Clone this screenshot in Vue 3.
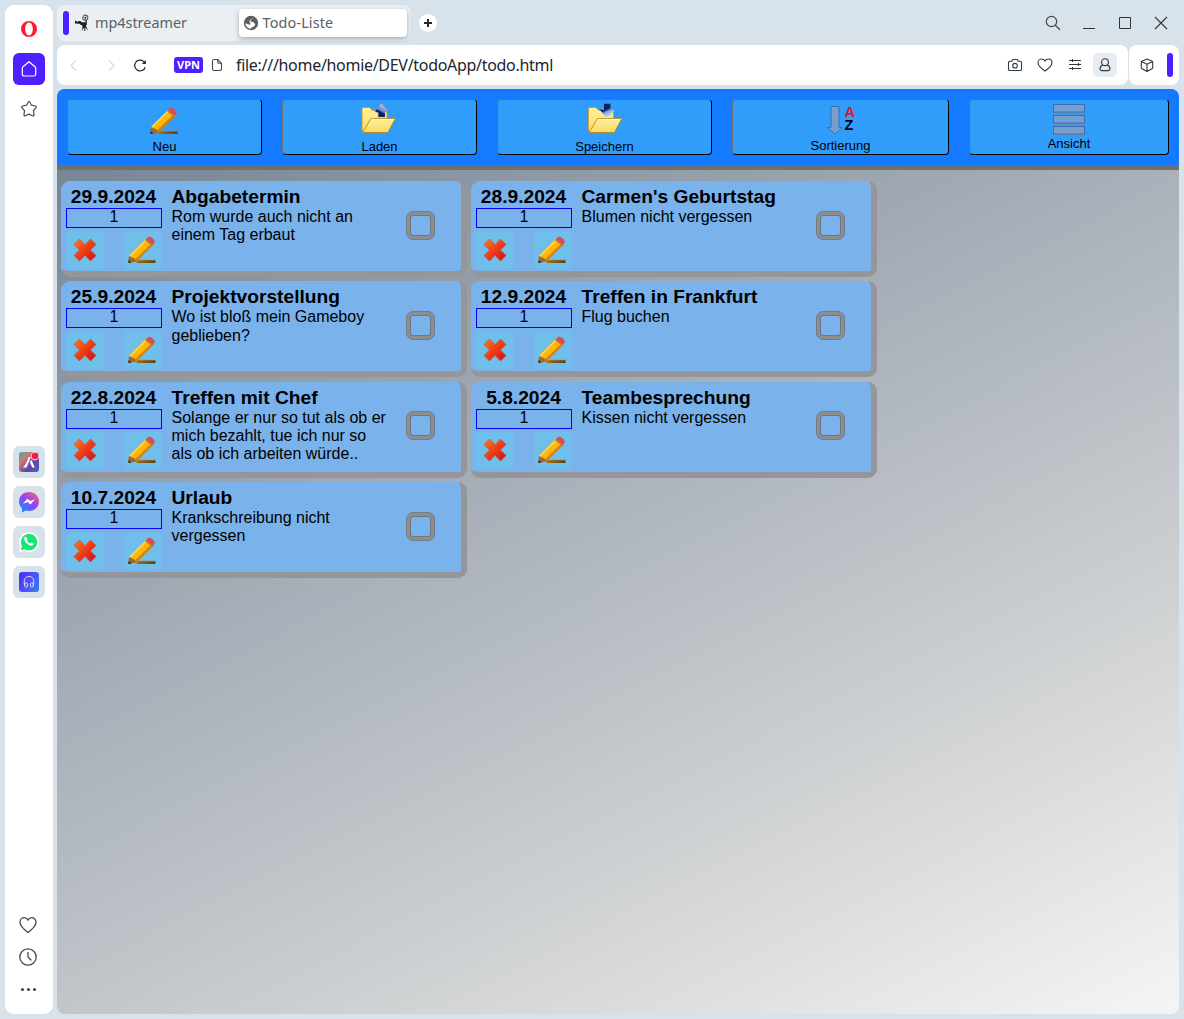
<script setup>
const actions = [
  { id: 'new', label: 'Neu', width: 195 },
  { id: 'load', label: 'Laden', width: 195 },
  { id: 'save', label: 'Speichern', width: 215 },
  { id: 'sort', label: 'Sortierung', width: 217 },
  { id: 'view', label: 'Ansicht', width: 200 },
]

const todos = [
  { date: '29.9.2024', title: 'Abgabetermin', text: 'Rom wurde auch nicht an einem Tag erbaut' },
  { date: '28.9.2024', title: "Carmen's Geburtstag", text: 'Blumen nicht vergessen' },
  { date: '25.9.2024', title: 'Projektvorstellung', text: 'Wo ist bloß mein Gameboy geblieben?' },
  { date: '12.9.2024', title: 'Treffen in Frankfurt', text: 'Flug buchen' },
  { date: '22.8.2024', title: 'Treffen mit Chef', text: 'Solange er nur so tut als ob er mich bezahlt, tue ich nur so als ob ich arbeiten würde..' },
  { date: '5.8.2024', title: 'Teambesprechung', text: 'Kissen nicht vergessen' },
  { date: '10.7.2024', title: 'Urlaub', text: 'Krankschreibung nicht vergessen' },
]
</script>

<template>
  <div class="window">
    <svg width="0" height="0" class="defs">
      <defs>
        <linearGradient id="gShadow" x1="0" x2="1" y1="0" y2="0">
          <stop offset="0" stop-color="#a5730f" /><stop offset="1" stop-color="#573f17" />
        </linearGradient>
        <linearGradient id="gCross" x1="0" x2="1" y1="0" y2="1">
          <stop offset="0" stop-color="#ff7a1c" /><stop offset="0.5" stop-color="#ee3d14" /><stop offset="1" stop-color="#c80a22" />
        </linearGradient>
        <linearGradient id="gFolder" x1="0" x2="0" y1="0" y2="1">
          <stop offset="0" stop-color="#fff09a" /><stop offset="1" stop-color="#fbdc62" />
        </linearGradient>
        <linearGradient id="gUp" gradientUnits="userSpaceOnUse" x1="16" x2="22" y1="14" y2="3">
          <stop offset="0.4" stop-color="#0d1f62" /><stop offset="0.55" stop-color="#6f8bcb" /><stop offset="1" stop-color="#a9bfec" />
        </linearGradient>
        <linearGradient id="gDown" gradientUnits="userSpaceOnUse" x1="16" x2="22" y1="3" y2="15">
          <stop offset="0.4" stop-color="#0d1f66" /><stop offset="0.6" stop-color="#8ea6dc" /><stop offset="1" stop-color="#d5e2fa" />
        </linearGradient>
        <symbol id="pencil" viewBox="0 0 28 28">
          <rect x="8.5" y="24" width="19" height="3" fill="url(#gShadow)" />
          <path d="M10 24h17.500" stroke="#a8935f" stroke-width=".7" />
          <path d="M1 20 18.500 2.500l6.500 5L8 25z" fill="#ffb70b" />
          <path d="M2.300 20.800 19.500 3.800l-1.200-1L1 20z" fill="#ffd84e" />
          <path d="M6.500 24 24 6.700l2 1.500L8 26z" fill="#d98205" />
          <path d="M1 20 .3 26.800 8.200 25.600 6.500 22.500z" fill="#9b6a35" />
          <path d="M.6 24 .3 27l3.400-.6z" fill="#3d2a19" />
          <path d="m17.600 3.600 2.500-2.500c1.800-1.700 7.200 2.500 6.600 5.200l-2 2.500z" fill="#dc4b55" />
          <path d="m17 4.200 1-1 6.900 5.600-1 1z" fill="#b97d35" />
        </symbol>
        <symbol id="folder" viewBox="0 0 35 26">
          <path d="M.5 24V2c0-.8.500-1.500 1.300-1.500h6.200l3 3H24c1 0 1.500.5 1.500 1.500v20z" fill="url(#gFolder)" stroke="#c29c3c" stroke-width=".9" />
          <path d="M1.200 25.200 9.500 11.500h24.300L27 24.300c-.4.900-1 1.200-1.800 1.200H2z" fill="url(#gFolder)" stroke="#b38a24" stroke-width=".9" />
          <path d="M9.900 12.400h22.500" stroke="#fff8bd" stroke-width=".8" />
        </symbol>
      </defs>
    </svg>

    <aside class="rail">
      <div class="rail-top">
        <svg class="opera" width="18" height="18" viewBox="0 0 18 18"><path fill-rule="evenodd" fill="#ff1b2d" d="M9 1a8 8 0 1 1 0 16A8 8 0 0 1 9 1zm0 1.500C6.600 2.500 5.200 5.500 5.200 9s1.400 6.500 3.800 6.500 3.800-3 3.800-6.500S11.400 2.500 9 2.500z" /></svg>
        <div class="home">
          <svg width="18" height="18" viewBox="0 0 18 18"><path d="m9 1.700 6 5c.5.500.7 1 .7 1.700v5.800c0 1.100-.7 1.800-1.800 1.800H4.100c-1.100 0-1.800-.7-1.800-1.800V8.400c0-.7.200-1.200.7-1.700z" fill="none" stroke="#fff" stroke-width="1.200" stroke-linejoin="round" /></svg>
        </div>
        <svg class="star" width="18" height="18" viewBox="0 0 18 18"><path d="M9 1.500c.4 0 .7.200.9.700l1.500 3 4 .8c.9.200 1.200 1 .6 1.700l-2.500 3 .5 4c.1.900-.6 1.400-1.400 1L9 14.100l-3.600 1.600c-.8.400-1.500-.1-1.400-1l.5-4L2 7.700C1.400 7 1.700 6.200 2.600 6l4-.8 1.500-3c.2-.5.500-.7.900-.7z" fill="none" stroke="#414b57" stroke-width="1.200" stroke-linejoin="round" /></svg>
      </div>
      <div class="rail-apps">
        <div class="app">
          <svg width="22" height="22" viewBox="0 0 22 22">
            <defs><linearGradient id="gAria" x1="0" x2="1" y1="0" y2="1"><stop offset="0" stop-color="#29b2c8" /><stop offset=".3" stop-color="#cf7a6b" /><stop offset=".65" stop-color="#6545a8" /><stop offset="1" stop-color="#4265bf" /></linearGradient></defs>
            <rect x="1" y="1" width="20" height="20" rx="3" fill="url(#gAria)" />
            <path d="M10.500 6h2.300L8.500 16.500H5c2.500-3 4.200-5.500 5.500-10.500zM11.800 11l1.700-2 3.300 7.500h-2.500z" fill="#fff" />
            <circle cx="17" cy="5" r="4.300" fill="#d8e2ea" /><circle cx="17" cy="5" r="3.300" fill="#fa1944" />
          </svg>
        </div>
        <div class="app">
          <svg width="22" height="22" viewBox="0 0 22 22">
            <defs><linearGradient id="gMsg" x1=".2" x2=".9" y1="1" y2="0"><stop offset="0" stop-color="#168dff" /><stop offset=".5" stop-color="#9144f5" /><stop offset="1" stop-color="#ff6474" /></linearGradient></defs>
            <path d="M11 1c5.700 0 10 4.100 10 9.500S16.700 20 11 20c-1 0-2-.1-2.800-.4-1.700.6-3 1.500-4.200 1.600v-3.800C2.200 15.800 1 13.400 1 10.500 1 5.100 5.300 1 11 1z" fill="url(#gMsg)" />
            <path d="m5 13 3.800-4.700c.4-.5 1-.5 1.400-.1l2.300 1.800L17 7.900l-3.700 4.900c-.4.500-1 .5-1.400.2L9.600 11z" fill="#fff" />
          </svg>
        </div>
        <div class="app">
          <svg width="22" height="22" viewBox="0 0 22 22">
            <path d="m1 21 1.400-5.100A10 10 0 1 1 6.200 19.700z" fill="#fff" />
            <path d="m2.700 19.300 1.200-4.200A8.200 8.200 0 1 1 6.900 18.200z" fill="#16e774" />
            <path d="M8.200 6.300c-.3-.6-1-.6-1.500 0-1.300 1.400-.4 3.600 1.400 5.400 2 2 4.400 3.600 6.500 2.600.9-.4 1.300-1.300 1-1.900l-2.200-1c-.5-.2-.8 1.100-1.400 1-1-.3-2.600-1.600-3-2.700 0-.5.900-.9.700-1.400z" fill="#fff" />
          </svg>
        </div>
        <div class="app">
          <svg width="22" height="22" viewBox="0 0 22 22">
            <defs><linearGradient id="gPlayer" x1="0" x2="1" y1=".2" y2=".8"><stop offset="0" stop-color="#4b31f2" /><stop offset=".5" stop-color="#5050fc" /><stop offset="1" stop-color="#337cf0" /></linearGradient></defs>
            <rect x="1" y="1" width="20" height="20" rx="3" fill="url(#gPlayer)" />
            <g fill="none" stroke="#d6dcff"><path d="M6.500 14.500c-1-7 1-9 4.500-9s5.500 2 4.500 9" /><ellipse cx="8.200" cy="14" rx="1.500" ry="2.200" /><ellipse cx="13.800" cy="14" rx="1.500" ry="2.200" /></g>
          </svg>
        </div>
      </div>
      <div class="rail-bottom">
        <svg width="20" height="20" viewBox="0 0 20 20"><path d="M10 17.500C6.500 14.800 2 11.200 2 7.200 2 4.500 3.900 2.700 6.200 2.700c1.700 0 3 .8 3.800 2.400.8-1.600 2.100-2.400 3.800-2.400C16.100 2.700 18 4.500 18 7.200c0 4-4.500 7.600-8 10.300z" fill="none" stroke="#414b57" stroke-width="1.300" stroke-linejoin="round" /></svg>
        <svg width="20" height="20" viewBox="0 0 20 20"><g fill="none" stroke="#414b57" stroke-width="1.300" stroke-linecap="round"><circle cx="10" cy="10" r="8.200" /><path d="M10 5.500V10l3 3" /></g></svg>
        <svg width="20" height="20" viewBox="0 0 20 20"><g fill="#414b57"><circle cx="4.500" cy="10.500" r="1.600" /><circle cx="10.500" cy="10.500" r="1.600" /><circle cx="16.500" cy="10.500" r="1.600" /></g></svg>
      </div>
    </aside>

    <div class="main">
      <div class="titlebar">
        <div class="tabs">
          <i class="island"></i>
          <div class="tab">
            <svg width="16" height="18" viewBox="0 0 16 18">
              <circle cx="11.300" cy="3.700" r="2.500" fill="none" stroke="#5d6060" stroke-width="1.200" /><circle cx="11.300" cy="3.700" r="1" fill="#333" />
              <path d="M1 6.500 4 8V7h2.500L8 8.200h3.500V6h1.300v5H7L5 9.800 1 9.600zM8 11h4l.3 2 2 3.500-3-3V17h-1v-3.500L7.500 17l1-3z" fill="#202222" />
            </svg>
            <span>mp4streamer</span>
          </div>
          <div class="tab active">
            <svg width="16" height="16" viewBox="0 0 16 16"><circle cx="8" cy="8" r="7.200" fill="#5a5e61" /><path d="M9.800 2.200c.2 1-.3 1.600-1.300 1.800-1 .1-.8 1.300-1.700 1.500-1 .2-.8 1.200 0 1.300h2.700c1.200 0 1 1.500 2.200 1.700 1 .2.500 1.500-.2 2.200-.8.700-1.300 1.400-2.300 1.400-.8.200-.5 1.300-1.200 1.700C5 13.500 2.300 11 2.300 8.300c1.500.6 3 1.200 4.500 1.400.9.100.8-1.700-.3-1.700" fill="#fff" /></svg>
            <span>Todo-Liste</span>
          </div>
        </div>
        <div class="plus"><svg width="18" height="18" viewBox="0 0 18 18"><path d="M9 5v8M5 9h8" stroke="#20272e" stroke-width="2" /></svg></div>
        <div class="controls">
          <svg width="18" height="18" viewBox="0 0 18 18"><g fill="none" stroke="#40464b" stroke-width="1.200"><circle cx="7.500" cy="7.500" r="5.200" /><path d="m11.300 11.300 4.700 4.500" /></g></svg>
          <svg width="18" height="18" viewBox="0 0 18 18"><path d="M3 14.500h12" stroke="#333" /></svg>
          <svg width="18" height="18" viewBox="0 0 18 18"><path d="M3.500 3.500h11v11h-11z" fill="none" stroke="#333" /></svg>
          <svg width="18" height="18" viewBox="0 0 18 18"><path d="m3 3 12 12M15 3 3 15" stroke="#333" stroke-width="1.100" /></svg>
        </div>
      </div>

      <div class="navrow">
        <div class="addressbar">
          <div class="nav">
            <svg width="18" height="18" viewBox="0 0 18 18"><path d="m11 4.500-5 5 5 5" fill="none" stroke="#b8bec3" /></svg>
            <svg width="18" height="18" viewBox="0 0 18 18"><path d="m7 4.500 5 5-5 5" fill="none" stroke="#b8bec3" /></svg>
            <svg width="18" height="18" viewBox="0 0 18 18"><path d="M14.200 11.200A5.400 5.400 0 1 1 12.600 5.400l1.400 1.400" fill="none" stroke="#20272e" stroke-width="1.200" /><path d="M14.800 4v4h-4z" fill="#20272e" /></svg>
          </div>
          <span class="vpn">VPN</span>
          <svg class="file" width="12" height="14" viewBox="0 0 12 14"><path d="M3 1.500h3.700l3.800 3.700v5.600c0 1-.6 1.700-1.700 1.700H3c-1 0-1.500-.6-1.500-1.600V3c0-1 .6-1.500 1.500-1.500zM6.700 1.800v2.400c0 .7.400 1 1 1h2.500" fill="none" stroke="#414b57" stroke-width="1.100" /></svg>
          <span class="url">file:///home/homie/DEV/todoApp/todo.html</span>
          <div class="tools">
            <svg width="18" height="18" viewBox="0 0 18 18"><g fill="none" stroke="#303a45" stroke-width="1.100"><path d="M3.800 5.200h2l1-1.700h4.400l1 1.700h2c.8 0 1.300.5 1.300 1.300v6.700c0 .8-.5 1.300-1.300 1.300H3.800c-.8 0-1.300-.5-1.300-1.300V6.500c0-.8.500-1.300 1.300-1.300z" /><circle cx="9" cy="9.700" r="2.300" /></g></svg>
            <svg width="18" height="18" viewBox="0 0 18 18"><path d="M9 15C6 12.900 2 10.100 2 6.700 2 4.500 3.600 3 5.500 3 7 3 8.300 3.700 9 5c.7-1.300 2-2 3.500-2C14.400 3 16 4.500 16 6.700c0 3.400-4 6.200-7 8.300z" fill="none" stroke="#303a45" stroke-width="1.100" /></svg>
            <svg width="18" height="18" viewBox="0 0 18 18"><path d="M3 4.500h12M3 8.500h12M3 12.500h12M6.500 3v3M12.500 7v3M6.500 11v3" stroke="#303a45" stroke-width="1.100" /></svg>
            <div class="profile"><svg width="18" height="18" viewBox="0 0 18 18"><g fill="none" stroke="#303a45" stroke-width="1.100"><circle cx="9" cy="6.200" r="3.400" /><path d="M6.700 8.900C5 9.600 4 11.500 4 13c0 1 .6 1.600 1.600 1.600h6.800c1 0 1.600-.6 1.600-1.600 0-1.500-1-3.400-2.700-4.100" /></g></svg></div>
          </div>
        </div>
        <div class="side">
          <svg width="18" height="18" viewBox="0 0 18 18"><path d="m9 3 5.700 2.500v6.700L9 15.500l-5.700-3.300V5.500zM3.300 5.500 9 8.300l5.700-2.800M9 8.300v7.200" fill="none" stroke="#303a45" stroke-width="1.100" stroke-linejoin="round" /></svg>
          <i></i>
        </div>
      </div>

      <div class="page">
        <header class="toolbar">
          <button v-for="a in actions" :key="a.id" :class="['action', a.id]" :style="{ width: a.width + 'px' }">
            <svg v-if="a.id === 'new'" width="28" height="28"><use href="#pencil" /></svg>
            <svg v-else-if="a.id === 'load'" width="36" height="32" viewBox="0 0 36 32">
              <use href="#folder" x="0.5" y="5" width="35" height="26" />
              <path d="M20 .4 28 9.700h-4V15h-6.700v-4.500l-3.300-.8z" fill="url(#gUp)" stroke="#6179ae" stroke-width=".4" />
            </svg>
            <svg v-else-if="a.id === 'save'" width="36" height="32" viewBox="0 0 36 32">
              <use href="#folder" x="1" y="5" width="35" height="26" />
              <path d="M17 1.700h6.500V8h4.300l-7.300 8.700L12.500 7.500 17 8z" fill="url(#gDown)" />
            </svg>
            <svg v-else-if="a.id === 'sort'" width="30" height="32" viewBox="0 0 30 32">
              <path d="M5 3.500h8v21h3.300L9 31 1.700 24.500H5z" fill="#769fd0" stroke="#3b6eb5" />
              <text x="18.500" y="13.800" fill="#d51c2c">A</text><text x="18.500" y="26.600">Z</text>
            </svg>
            <svg v-else width="33" height="34" viewBox="0 0 33 34">
              <g v-for="n in 3" :key="n" :transform="`translate(0 ${(n - 1) * 11})`">
                <rect x="1" y="2" width="32" height="8.500" fill="#808894" /><rect x=".5" y="1.500" width="31" height="7.500" fill="#769fd0" stroke="#3b6eb5" />
              </g>
            </svg>
            <span>{{ a.label }}</span>
          </button>
        </header>

        <main class="list">
          <article v-for="t in todos" :key="t.date" class="card">
            <div class="meta">
              <b class="date">{{ t.date }}</b>
              <div class="count">1</div>
              <div class="buttons">
                <button class="mini"><svg width="24" height="24" viewBox="0 0 24 24"><path d="M6.500 1 12 6.700 17.500 1 23 6.500 17.400 12l5.600 5.500-5.500 5.500L12 17.300 6.500 23 1 17.500 6.600 12 1 6.500z" fill="url(#gCross)" stroke="#c84a32" stroke-width=".6" stroke-linejoin="round" /></svg></button>
                <button class="mini edit"><svg width="28" height="28"><use href="#pencil" /></svg></button>
              </div>
            </div>
            <div class="body">
              <b>{{ t.title }}</b>
              <p>{{ t.text }}</p>
            </div>
            <span class="check"></span>
          </article>
        </main>
      </div>
    </div>
  </div>
</template>

<style>
body { background: #d8e2ea; }
</style>

<style scoped>
* { box-sizing: border-box; }
svg { display: block; flex: none; }
button { padding: 0; margin: 0; font: inherit; color: inherit; }
.defs { position: absolute; }
.window { display: flex; gap: 4px; width: 1184px; height: 1019px; padding: 5px; background: #d8e2ea; font-family: "Liberation Sans", Arial, sans-serif; }
.rail { display: flex; flex-direction: column; align-items: center; width: 48px; background: #fff; border-radius: 9px; }
.rail-top { display: flex; flex-direction: column; align-items: center; height: 441px; padding-top: 15px; }
.home { display: flex; align-items: center; justify-content: center; width: 32px; height: 32px; margin: 15px 0; background: #4f20ff; border-radius: 6px; }
.rail-apps { display: flex; flex-direction: column; gap: 8px; }
.app { display: flex; align-items: center; justify-content: center; width: 32px; height: 32px; background: #d8e2ea; border-radius: 6px; }
.rail-bottom { display: flex; flex-direction: column; gap: 12px; margin-top: auto; padding: 0 2px 15px 0; }
.main { flex: 1; display: flex; flex-direction: column; gap: 4px; min-width: 0; }

.titlebar { display: flex; align-items: center; height: 36px; }
.tabs { display: flex; align-items: center; width: 354px; height: 36px; padding: 0 4px 0 6px; background: #eaeff3; border-radius: 8px; }
.island { width: 6px; height: 24px; background: #4f20ff; border-radius: 3px; }
.tab { display: flex; align-items: center; gap: 5px; width: 169px; height: 28px; padding-left: 5px; font: 14.4px "Noto Sans", sans-serif; color: #5c6063; }
.tab span { padding-bottom: 1px; }
.tab.active { gap: 4px; margin-left: 1px; padding-left: 4px; background: #fff; border-radius: 4px; box-shadow: 0 2px 5px rgba(60, 75, 90, .4); }
.tab.active span { letter-spacing: .15px; }
.plus { margin-left: 8px; background: #fff; border-radius: 50%; }
.controls { display: flex; gap: 18px; margin-left: auto; padding-right: 9px; }

.navrow { display: flex; gap: 1.500px; height: 40px; }
.addressbar { display: flex; align-items: center; width: 1070.500px; padding: 0 10.500px 0 8px; background: #fff; border-radius: 8px; }
.nav { display: flex; }
.nav svg + svg { margin-left: 19px; }
.nav svg:last-child { margin-left: 11px; }
.vpn { width: 29px; height: 16px; margin-left: 25px; background: #4f20ff; border-radius: 3px; color: #fff; font: bold 11px/16px "Noto Sans", sans-serif; text-align: center; }
.file { margin-left: 8px; }
.url { margin-left: 13px; font: 16px "Noto Sans", sans-serif; letter-spacing: -.3px; color: #20272e; white-space: nowrap; }
.tools { display: flex; align-items: center; gap: 12px; margin-left: auto; }
.profile { display: flex; align-items: center; justify-content: center; width: 24px; height: 24px; margin-left: -3px; background: #e8edf1; border-radius: 5px; }
.side { display: flex; align-items: center; justify-content: space-between; flex: 1; padding: 0 6px 0 9px; background: #fff; border-radius: 8px; }
.side i { width: 6px; height: 24px; background: #4f20ff; border-radius: 3px; }

.page { flex: 1; background: linear-gradient(153deg, #708090, #b2b8c0 50%, #d3d5d6 75%, #f5f5f5); border-radius: 8px; overflow: hidden; }
.toolbar { display: flex; gap: 20px; height: 81px; padding: 10px 10px 0; background: #147aff; border-bottom: 5px solid #707070; }
.action { display: flex; flex-direction: column; align-items: center; justify-content: flex-end; height: 56px; border: 1px solid #000; border-top-color: #6c7075; border-left-color: #6c7075; border-radius: 4px; background: #319dfa; font-size: 13px; line-height: 15px; }
.action.new svg { margin: 0 2px 4px 0; }
.action.load svg, .action.save svg { margin-bottom: 5px; }
.action.load svg { margin-right: 1px; }
.action.sort svg { margin-bottom: 3px; }
.action.sort span { margin-bottom: 1px; }
.action.view svg { margin-bottom: -1px; }
.action.view span { margin-bottom: 3px; }
.action text { font: bold 14.500px "Liberation Sans", Arial, sans-serif; }

.list { display: grid; grid-template-columns: 406px 406px; grid-auto-rows: 96px; gap: 4.400px 4px; padding: 11px 4px; }
.card { display: flex; border: solid #949699; border-width: 0 6px 6px 0; border-radius: 9px; background: #7ab3eb; padding: 5px 0 0 5px; }
.meta { width: 96px; text-align: center; }
.date { display: block; margin-left: -1px; font-size: 19.2px; line-height: 21px; }
.count { height: 20px; margin-top: 1px; border: 1px solid #0000f5; font-size: 16px; line-height: 16px; }
.buttons { display: flex; justify-content: space-between; margin-top: 2.600px; }
.mini { display: flex; align-items: center; justify-content: center; width: 38px; height: 38px; border: 0; border-radius: 5px; background: #70bfeb; }
.mini.edit { padding-right: 2px; }
.body { width: 218px; margin-left: 9.500px; }
.body b { display: block; font-size: 19.2px; line-height: 21px; white-space: nowrap; }
.body p { margin: .850px 0 0; font-size: 16px; line-height: 18.300px; }
.check { width: 29px; height: 29px; margin: 24.600px 0 0 16.500px; border: 1px solid #727d89; border-radius: 7px; box-shadow: inset 0 0 0 3px #8f8d8d, inset 0 0 0 4px #6c7885; }
</style>
